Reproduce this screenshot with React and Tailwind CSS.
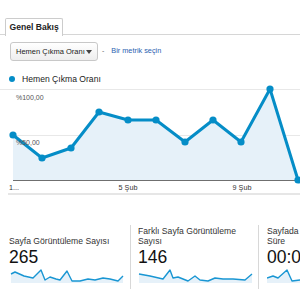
import React from "react";

const pts = [
  [13, 51], [42, 74], [71, 64], [99, 28], [128, 36], [156, 36],
  [185, 58], [213, 36], [241, 58], [270, 5], [298, 96],
];

function Chart() {
  const line = pts.map((p) => p.join(",")).join(" ");
  const area = line + " 298,96 13,96";
  return (
    <svg width="300" height="112" viewBox="0 0 300 112" className="block">
      <line x1="0" y1="5.5" x2="300" y2="5.5" stroke="#e8e8e8" strokeWidth="1" />
      <line x1="13" y1="51.5" x2="300" y2="51.5" stroke="#e8e8e8" strokeWidth="1" />
      <polygon points={area} fill="#e6f1f9" />
      <line x1="13" y1="96.5" x2="300" y2="96.5" stroke="#6f6f6f" strokeWidth="1.2" />
      <text x="16" y="15.5" fontSize="7" fill="#555" fontFamily="Liberation Sans, Arial, sans-serif">%100,00</text>
      <polyline points={line} fill="none" stroke="#058dc7" strokeWidth="3" strokeLinejoin="round" strokeLinecap="round" />
      <text x="16" y="60.5" fontSize="7" fill="#555" fontFamily="Liberation Sans, Arial, sans-serif">%50,00</text>
      {pts.map((p, i) => (
        <circle key={i} cx={p[0]} cy={p[1]} r="3.6" fill="#058dc7" />
      ))}
      <text x="9" y="106" fontSize="7.2" fill="#333" fontFamily="Liberation Sans, Arial, sans-serif">1...</text>
      <text x="128" y="106" fontSize="7.2" fill="#333" textAnchor="middle" fontFamily="Liberation Sans, Arial, sans-serif">5 Şub</text>
      <text x="242" y="106" fontSize="7.2" fill="#333" textAnchor="middle" fontFamily="Liberation Sans, Arial, sans-serif">9 Şub</text>
      <line x1="8" y1="110" x2="300" y2="110" stroke="#dedede" strokeWidth="1.5" />
    </svg>
  );
}

function Spark({ points, width }) {
  const line = points.map((p) => p.join(",")).join(" ");
  const first = points[0];
  const last = points[points.length - 1];
  const area = `${line} ${last[0]},16 ${first[0]},16`;
  return (
    <svg width={width} height="16" viewBox={`0 0 ${width} 16`} className="block">
      <polygon points={area} fill="#e6f1f9" />
      <polyline points={line} fill="none" stroke="#1996d3" strokeWidth="1.4" strokeLinejoin="round" />
    </svg>
  );
}

// sparkline coords relative to column content origin (x) and y top 266
const s1 = [[2, 7], [6, 5], [15, 9], [24, 11], [32, 3], [36, 13], [41, 10], [47, 12], [51, 13], [58, 4], [63, 14], [71, 14], [79, 12], [86, 13], [94, 11], [101, 12], [109, 14], [114, 9]];
const s2 = [[1, 7], [12, 9], [25, 12], [32, 3], [35, 11], [40, 10], [50, 14], [57, 9], [62, 13], [70, 14], [77, 11], [85, 12], [95, 12], [107, 13], [114, 7]];
const s3 = [[0, 11], [6, 9], [11, 11], [20, 3], [25, 14], [33, 13], [45, 13]];

function Metric({ label, value, spark, sparkW, border, pad }) {
  return (
    <div className={`h-[64px] flex flex-col ${pad} ${border ? "border-r border-[#d8d8d8]" : ""}`}>
      <div className="h-[21px] flex items-end text-[8.6px] leading-[10px] text-[#333] whitespace-pre-line">
        {label}
      </div>
      <div className="text-[17.5px] leading-[19px] text-[#111] mt-[2px] whitespace-nowrap">{value}</div>
      <div className="mt-[0px]">
        <Spark points={spark} width={sparkW} />
      </div>
    </div>
  );
}

export default function App() {
  return (
    <div className="w-[300px] h-[300px] overflow-hidden bg-white font-['Liberation_Sans',Arial,sans-serif]">
      <div className="pt-[17px]">
        <div className="flex border-b-[1.5px] border-[#d6d6d6] h-[18px]">
          <div className="ml-[5px] w-[58px] h-[18px] border border-b-0 border-[#cccccc] rounded-t-[2px] bg-white flex items-center pl-[3.5px] text-[8.6px] font-bold text-[#222] relative top-[1px]">
            Genel Bakış
          </div>
        </div>
      </div>
      <div className="flex items-center mt-[7px] pl-[10px] h-[19px]">
        <div className="w-[88px] h-[19px] border border-[#c8c8c8] rounded-[3px] bg-gradient-to-b from-white to-[#eeeeee] flex items-center pl-[5px] pr-[5px] text-[7.5px] text-[#222]">
          <span className="flex-1 whitespace-nowrap">Hemen Çıkma Oranı</span>
          <svg width="6" height="4" viewBox="0 0 6 4"><polygon points="0,0 6,0 3,4" fill="#444" /></svg>
        </div>
        <span className="ml-[4px] text-[7px] text-[#666]">-</span>
        <span className="ml-[7px] text-[7.3px] text-[#2a5fb0] whitespace-nowrap">Bir metrik seçin</span>
      </div>
      <div className="flex items-center mt-[13px] h-[10px] pl-[9px]">
        <span className="w-[6px] h-[6px] rounded-full bg-[#058dc7]" />
        <span className="ml-[7px] text-[8.6px] text-[#222] whitespace-nowrap">Hemen Çıkma Oranı</span>
      </div>
      <Chart />
      <div className="grid grid-cols-[131px_128px_128px] mt-[29px]">
        <Metric label="Sayfa Görüntüleme Sayısı" value="265" spark={s1} sparkW={118} border pad="pl-[9px]" />
        <Metric label={"Farklı Sayfa Görüntüleme\nSayısı"} value="146" spark={s2} sparkW={116} border pad="pl-[7px]" />
        <Metric label={"Sayfada Geçirilen Ort.\nSüre"} value="00:00:15" spark={s3} sparkW={110} pad="pl-[8px]" />
      </div>
    </div>
  );
}
